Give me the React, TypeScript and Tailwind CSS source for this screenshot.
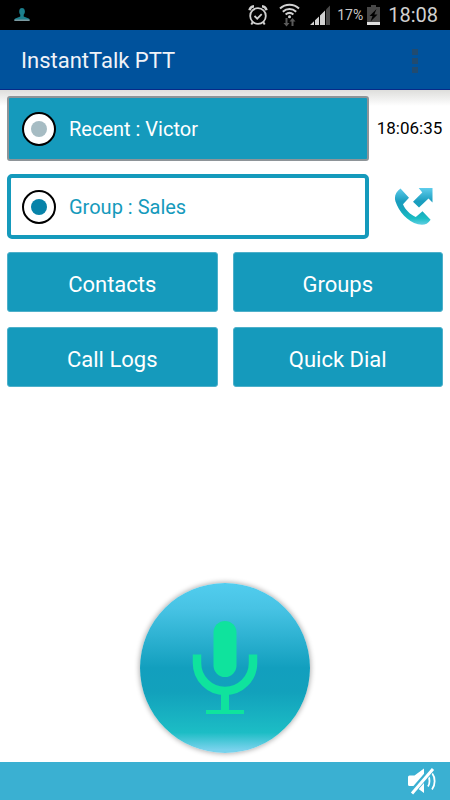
import { useState } from 'react';

type Target = 'recent' | 'group';

const MENU_ITEMS = ['Contacts', 'Groups', 'Call Logs', 'Quick Dial'];

function StatusBar() {
  return (
    <div className="flex h-[30px] shrink-0 items-center justify-between bg-black pl-[14px] pr-3">
      <svg width="16" height="16" viewBox="0 0 16 16" aria-hidden="true">
        <path d="M5.2 4.5C5.2 2 6.4 1 8 1s2.900 1 2.900 3.500c0 1.500-.6 2.500-1.200 3.200v1.800l5 1.900c.6.3.9.9.9 2.100H.4c0-1.200.3-1.800.9-2.100l5-1.900V7.700C5.700 7 5.200 6 5.200 4.500Z" fill="#1c7f8c" />
        <path d="M.4 12.500h15.200V14H.4Z" fill="#7c99a0" />
      </svg>
      <div className="flex items-center">
        <svg width="20" height="22" viewBox="0 0 20 22" fill="none" stroke="#d0d0d0" strokeWidth="1.800" aria-hidden="true">
          <circle cx="10" cy="12" r="7.800" />
          <path d="M6.500 12l2.700 2.700 4.500-4.500" />
          <path d="M1.500 6.200A5 5 0 0 1 6 2.300M18.500 6.200A5 5 0 0 0 14 2.300" strokeWidth="2.500" />
          <path d="M4.800 18l-1.500 2.500M15.200 18l1.500 2.500" strokeWidth="2" />
        </svg>
        <svg className="ml-[11px]" width="21" height="24" viewBox="0 0 21 24" fill="none" stroke="#d0d0d0" strokeWidth="2" aria-hidden="true">
          <path d="M1 5.500C6.500.5 14.500.5 20 5.500" />
          <path d="M3.800 8.700c4-3.600 9.400-3.600 13.400 0" />
          <path d="M6.600 11.600c2.300-2 5.500-2 7.800 0" />
          <circle cx="10.500" cy="13.800" r="1.500" fill="#d0d0d0" stroke="none" />
          <path d="M6.500 15h2v5h2L7.500 23.500l-3-3.500h2ZM12.500 23v-4.500h-2l3-3.500 3 3.500h-2V23Z" fill="#5a5a5a" stroke="none" />
        </svg>
        <svg className="ml-[9px]" width="22" height="20" viewBox="0 0 22 20" fill="#d0d0d0" aria-hidden="true">
          <path d="M1 20l4-3.800V20ZM6 15.300l4-3.800V20H6ZM11 10.500l5-5V20h-5Z" />
          <path d="M17 4.500L21 .5V20h-4Z" fill="#484848" />
        </svg>
        <span className="ml-1.5 font-['Roboto',sans-serif] text-[14px] leading-5 text-[#c8c8c8]">17%</span>
        <svg className="ml-1" width="13" height="20" viewBox="0 0 13 20" aria-hidden="true">
          <path d="M4 0h5v2h4v18H0V2h4Z" fill="#484848" />
          <path d="M0 17h13v3H0Z" fill="#e0e0e0" />
          <path d="M9.500 4L2.500 11h3l-2 5.500 7-7H7.300L9.500 4Z" fill="#000" />
        </svg>
        <span className="ml-2 font-['Roboto',sans-serif] text-[20px] leading-6 text-[#d0d0d0]">18:08</span>
      </div>
    </div>
  );
}

function OutgoingCallIcon() {
  return (
    <svg width="40" height="40" viewBox="0 0 40 40" aria-hidden="true">
      <defs>
        <linearGradient id="call" gradientUnits="userSpaceOnUse" x1="0" y1="1" x2="0" y2="39">
          <stop offset="0" stopColor="#5fcdec" />
          <stop offset="0.35" stopColor="#1a9dbf" />
          <stop offset="0.550" stopColor="#16a3bb" />
          <stop offset="0.8" stopColor="#1bbdc4" />
          <stop offset="1" stopColor="#70d2ea" />
        </linearGradient>
      </defs>
      <g fill="url(#call)">
        <path d="M6.500 1.500c-4.500 3-6.700 7.700-5 13 3.400 10.400 12 20 22.500 22.800 5.500 1.200 9.500.2 12.600-4.600L28.500 24.300l-6.700 5.700C16.500 28 11 22.500 9 17.300l6-6.600Z" />
        <path d="M24.700 1H38.500v14.500l-4-4L25 20.500 19 14.800l9.300-9.300Z" />
      </g>
    </svg>
  );
}

function MicIcon() {
  return (
    <svg className="block size-full" viewBox="0 0 170 170" fill="#0fe39d" aria-hidden="true">
      <rect x="73.500" y="38" width="23" height="56" rx="11.500" />
      <path d="M57 71.500V80a28 28 0 0 0 56 0V71.500" fill="none" stroke="#0fe39d" strokeWidth="8.500" />
      <path d="M81 110h8v17h15v4H66v-4h15Z" />
    </svg>
  );
}

function MutedIcon() {
  return (
    <svg width="30" height="28" viewBox="0 0 30 28" aria-hidden="true">
      <path d="M2.500 8.500h5L17 1.500V26l-9.500-7h-5a1.500 1.500 0 0 1-1.500-1.500V10a1.500 1.500 0 0 1 1.500-1.500Z" fill="#fff" />
      <path d="M21 8.500c2 3 2 8 0 11M25 6c3.500 4.500 3.500 12 0 16.500" fill="none" stroke="#fff" strokeWidth="1.800" />
      <path d="M3.500 27L26 1" stroke="#3ab0d2" strokeWidth="6" />
      <path d="M5 26.500L26 2" stroke="#fff" strokeWidth="3" />
    </svg>
  );
}

const radioClass =
  "grid size-[34px] shrink-0 appearance-none place-items-center rounded-full border-2 border-black bg-white before:size-4 before:rounded-full before:bg-[#a6bcc3] before:content-[''] checked:before:bg-[#0783a9]";

export default function App() {
  const [target, setTarget] = useState<Target>('group');

  return (
    <div className="flex min-h-screen flex-col bg-white font-['Roboto',sans-serif]">
      <StatusBar />

      <header className="flex h-[60px] shrink-0 items-center justify-between border-b border-[#082a88] bg-[#00529c] pl-[21px] pr-8 pt-[3px]">
        <h1 className="text-[22px] leading-7 text-[#f0f3f8]">InstantTalk PTT</h1>
        <button type="button" aria-label="More options" className="flex flex-col gap-[3px]">
          <span className="size-1.5 bg-[#214b70]" />
          <span className="size-1.5 bg-[#214b70]" />
          <span className="size-1.5 bg-[#214b70]" />
        </button>
      </header>

      <main className="flex grow flex-col bg-linear-to-b from-[#dededc] to-white to-[16px]">
        <div className="flex flex-col gap-[13px] pl-[7px] pt-1.5">
          <div className="flex items-center">
            <label className="flex h-[65px] grow items-center gap-[13px] rounded-[3px] border-2 border-[#8e9498] bg-[#159abc] pl-[13px] text-[20px] text-white">
              <input
                type="radio"
                name="target"
                className={radioClass}
                checked={target === 'recent'}
                onChange={() => setTarget('recent')}
              />
              Recent : Victor
            </label>
            <time className="w-[81px] text-center text-[17px] text-black">18:06:35</time>
          </div>

          <div className="flex items-center">
            <label className="flex h-[65px] grow items-center gap-[13px] rounded-[5px] border-4 border-[#159abc] bg-white pl-[11px] text-[20px] text-[#159abc]">
              <input
                type="radio"
                name="target"
                className={radioClass}
                checked={target === 'group'}
                onChange={() => setTarget('group')}
              />
              Group : Sales
            </label>
            <button type="button" aria-label="Call" className="flex w-[81px] justify-center pl-2">
              <OutgoingCallIcon />
            </button>
          </div>
        </div>

        <nav className="mt-[13px] grid grid-cols-2 gap-[15px] px-[7px]">
          {MENU_ITEMS.map((item) => (
            <button
              key={item}
              type="button"
              className="h-[60px] rounded-[3px] border border-[#4eb0ca] bg-[#159abc] pt-1 text-[22px] text-white"
            >
              {item}
            </button>
          ))}
        </nav>

        <div className="mt-auto flex justify-center pb-[9px]">
          <button
            type="button"
            aria-label="Push to talk"
            className="size-[170px] rounded-full bg-[linear-gradient(#52cdef_0%,#47c3e4_15%,#129fbe_50%,#12a1bc_64%,#1cbdc5_88%,#78d2ec_98%)] shadow-[0_0_5px_1px_rgba(0,0,0,0.3)]"
          >
            <MicIcon />
          </button>
        </div>
      </main>

      <footer className="flex h-[38px] shrink-0 items-center justify-end bg-[#3ab0d2] pr-[13px]">
        <button type="button" aria-label="Unmute">
          <MutedIcon />
        </button>
      </footer>
    </div>
  );
}
